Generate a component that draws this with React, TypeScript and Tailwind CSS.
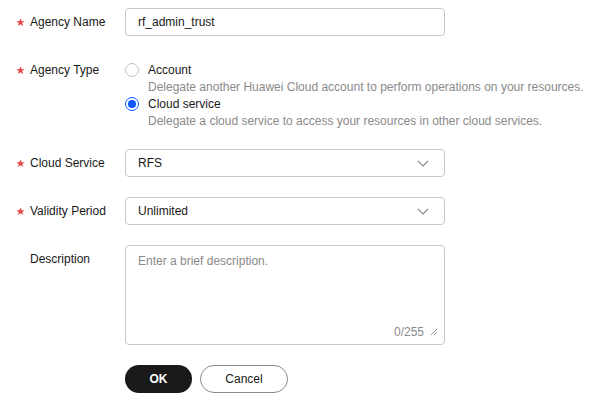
const Star = () => (
    <svg width="9" height="9" viewBox="0 0 10 10" className="shrink-0">
        <path d="M5 0.3L6.2 3.5L9.6 3.5L6.9 5.6L7.9 9L5 6.9L2.1 9L3.1 5.6L0.4 3.5L3.8 3.5Z" fill="#e54545" />
    </svg>
);

const Label = ({ text, required, top }: { text: string; required?: boolean; top?: boolean }) => (
    <div className={`w-[125px] shrink-0 flex items-center pl-[16px] text-[12px] text-[#191919] ${top ? "mt-[6px] h-[16px]" : "h-[28px]"}`}>
        <span className="w-[14px] flex items-center">{required && <Star />}</span>
        <span>{text}</span>
    </div>
);

const Radio = ({ checked }: { checked?: boolean }) => (
    <span className={`w-[14px] h-[14px] rounded-full border flex items-center justify-center shrink-0 ${checked ? "border-[#0a59f7]" : "border-[#c2c2c2]"}`}>
        {checked && <span className="w-[8px] h-[8px] rounded-full bg-[#0a59f7]" />}
    </span>
);

const Chevron = () => (
    <svg width="12" height="7" viewBox="0 0 12 7" fill="none" stroke="#8a8a8a" strokeWidth="1.1">
        <path d="M1 1L6 6L11 1" />
    </svg>
);

const Select = ({ value }: { value: string }) => (
    <div className="w-[320px] h-[28px] border border-[#c8c8c8] rounded-[4px] flex items-center justify-between pl-[12px] pr-[15px] text-[12px] text-[#191919]">
        <span>{value}</span>
        <Chevron />
    </div>
);

export default function App() {
    return (
        <div className="w-[615px] h-[404px] bg-white pt-[8px] font-['Liberation_Sans',Arial,sans-serif]">
            <div className="flex mb-[20px]">
                <Label text="Agency Name" required />
                <div className="w-[320px] h-[28px] border border-[#c8c8c8] rounded-[4px] flex items-center pl-[12px] text-[12px] text-[#191919]">
                    rf_admin_trust
                </div>
            </div>

            <div className="flex mb-[20px]">
                <Label text="Agency Type" required top />
                <div className="pt-[6px] text-[12px] leading-[16px]">
                    <div className="flex items-center gap-[9px] text-[#191919]">
                        <Radio />
                        <span>Account</span>
                    </div>
                    <div className="pl-[23px] mt-[1px] text-[#8a8a8a]">
                        Delegate another Huawei Cloud account to perform operations on your resources.
                    </div>
                    <div className="flex items-center gap-[9px] text-[#191919] mt-[1px]">
                        <Radio checked />
                        <span>Cloud service</span>
                    </div>
                    <div className="pl-[23px] mt-[1px] text-[#8a8a8a]">
                        Delegate a cloud service to access your resources in other cloud services.
                    </div>
                </div>
            </div>

            <div className="flex mb-[20px]">
                <Label text="Cloud Service" required />
                <Select value="RFS" />
            </div>

            <div className="flex mb-[20px]">
                <Label text="Validity Period" required />
                <Select value="Unlimited" />
            </div>

            <div className="flex mb-[20px]">
                <Label text="Description" top />
                <div className="relative w-[320px] h-[100px] border border-[#c8c8c8] rounded-[4px] pl-[12px] pt-[6px] text-[12px] text-[#8a8a8a]">
                    Enter a brief description.
                    <div className="absolute right-[6px] bottom-[3px] flex items-center gap-[6px] text-[12px] text-[#8a8a8a]">
                        <span>0/255</span>
                        <svg width="8" height="8" viewBox="0 0 8 8" fill="none" stroke="#9a9a9a" strokeWidth="1">
                            <path d="M1 7L7 1M4 7L7 4" />
                        </svg>
                    </div>
                </div>
            </div>

            <div className="flex gap-[8px] pl-[125px]">
                <button className="w-[67px] h-[28px] rounded-full bg-[#191919] text-white text-[12px] font-bold">OK</button>
                <button className="w-[88px] h-[28px] rounded-full border border-[#8a8a8a] bg-white text-[#191919] text-[12px]">Cancel</button>
            </div>
        </div>
    );
}
